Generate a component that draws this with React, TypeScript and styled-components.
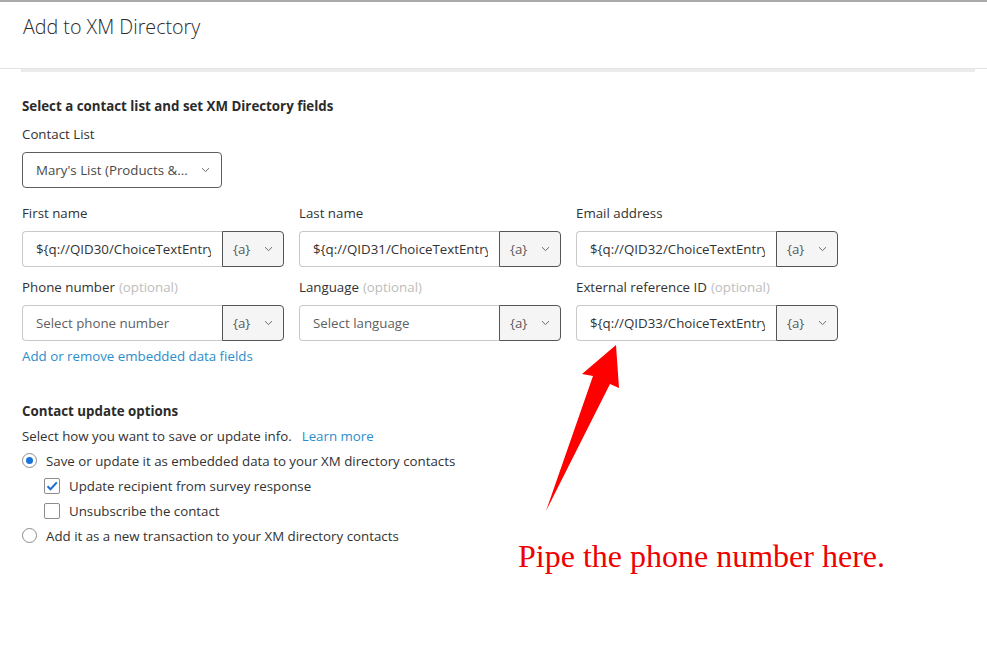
import React from "react";
import styled, { createGlobalStyle } from "styled-components";

const Global = createGlobalStyle`
  html, body { margin: 0; padding: 0; background: #fff; }
  body { font-family: "Open Sans", "Noto Sans", Arial, sans-serif; color: #323232; }
  * { box-sizing: border-box; }
`;

const Page = styled.div`
  position: relative;
  width: 987px;
  height: 669px;
  border-top: 2px solid #a9a9a9;
  overflow: hidden;
`;

const Header = styled.div`
  height: 66px;
  padding: 12px 0 0 23px;
`;

const Title = styled.h1`
  margin: 0;
  font-size: 19.7px;
  font-weight: 300;
  line-height: 26px;
  color: #2b2b2b;
`;

const Divider = styled.div`
  border-top: 1px solid #e3e3e3;
  padding: 0 12px 0 21px;
`;

const Shade = styled.div`
  height: 3px;
  background: #ebebeb;
`;

const Body = styled.div`
  padding: 25px 0 0 22px;
`;

const Heading = styled.h2<{ $top?: number }>`
  margin: ${(p) => p.$top ?? 0}px 0 0;
  font-size: 13.3px;
  font-weight: 700;
  line-height: 18px;
  color: #2b2b2b;
`;

const Label = styled.div<{ $top?: number }>`
  font-size: 13.3px;
  line-height: 18px;
  color: #323232;
  margin: ${(p) => p.$top ?? 0}px 0 9px;
`;

const Optional = styled.span`
  color: #bdbdbd;
  margin-left: 4px;
`;

const Chevron = () => (
  <svg width="9" height="6" viewBox="0 0 9 6" fill="none">
    <path d="M1 1.2 L4.5 4.6 L8 1.2" stroke="#6b6b6b" strokeWidth="1" />
  </svg>
);

const Dropdown = styled.div`
  width: 200px;
  height: 36px;
  border: 1px solid #5e5e5e;
  border-radius: 4px;
  display: flex;
  align-items: center;
  justify-content: space-between;
  padding: 0 11px 0 13px;
  font-size: 13.3px;
  color: #4a4a4a;
  margin-bottom: 16px;
`;

const Grid = styled.div`
  display: grid;
  grid-template-columns: repeat(3, 262px);
  column-gap: 15px;
  row-gap: 11px;
`;

const Field = styled.div``;

const Group = styled.div`
  display: flex;
  height: 36px;
  width: 262px;
`;

const TextPart = styled.div<{ $placeholder?: boolean }>`
  width: 200px;
  border: 1px solid #c9c9c9;
  border-right: none;
  border-radius: 4px 0 0 4px;
  padding: 0 11px 0 13px;
  display: flex;
  align-items: center;
  overflow: hidden;
  white-space: nowrap;
  font-size: 13.3px;
  color: ${(p) => (p.$placeholder ? "#5f5f5f" : "#333")};
`;

const Clip = styled.span`
  display: block;
  overflow: hidden;
  width: 100%;
`;

const Addon = styled.div`
  flex: 1;
  border: 1px solid #555;
  border-radius: 0 4px 4px 0;
  background: #f5f5f5;
  display: flex;
  align-items: center;
  gap: 14px;
  padding-left: 10px;
  font-size: 13.3px;
  color: #5a5a5a;
`;

const Link = styled.a`
  color: #2b8dcc;
  font-size: 13.3px;
  line-height: 18px;
  text-decoration: none;
`;

const LinkRow = styled.div`
  margin-top: 3px;
`;

const Desc = styled.div`
  margin-top: 7px;
  font-size: 13.3px;
  line-height: 18px;
  color: #323232;
  display: flex;
  gap: 10px;
`;

const Options = styled.div`
  margin-top: 3px;
  display: flex;
  flex-direction: column;
`;

const OptionRow = styled.div<{ $indent?: boolean }>`
  height: 25px;
  display: flex;
  align-items: center;
  padding-left: ${(p) => (p.$indent ? 22 : 0)}px;
  gap: 9px;
  font-size: 13.3px;
  color: #323232;
`;

const Radio = styled.span<{ $on?: boolean }>`
  width: 15px;
  height: 15px;
  border-radius: 50%;
  border: 1px solid #8c8c8c;
  display: flex;
  align-items: center;
  justify-content: center;
  &::after {
    content: "";
    width: 7px;
    height: 7px;
    border-radius: 50%;
    background: ${(p) => (p.$on ? "#1a73d9" : "transparent")};
  }
`;

const Check = styled.span`
  width: 16px;
  height: 16px;
  border: 1px solid #8c8c8c;
  border-radius: 2px;
  display: flex;
  align-items: center;
  justify-content: center;
`;

const Overlay = styled.svg`
  position: absolute;
  left: 0;
  top: 0;
  pointer-events: none;
`;

const Note = styled.div`
  position: absolute;
  left: 518px;
  top: 534px;
  font-family: "Liberation Serif", "Times New Roman", serif;
  font-size: 32px;
  line-height: 40px;
  color: #ee0000;
  white-space: nowrap;
`;

type F = { label: string; optional?: boolean; value: string; placeholder?: boolean };

const fields: F[] = [
  { label: "First name", value: "${q://QID30/ChoiceTextEntryValue}" },
  { label: "Last name", value: "${q://QID31/ChoiceTextEntryValue}" },
  { label: "Email address", value: "${q://QID32/ChoiceTextEntryValue}" },
  { label: "Phone number", optional: true, value: "Select phone number", placeholder: true },
  { label: "Language", optional: true, value: "Select language", placeholder: true },
  { label: "External reference ID", optional: true, value: "${q://QID33/ChoiceTextEntryValue}" },
];

export default function App() {
  return (
    <>
      <Global />
      <Page>
        <Header>
          <Title>Add to XM Directory</Title>
        </Header>
        <Divider>
          <Shade />
        </Divider>
        <Body>
          <Heading>Select a contact list and set XM Directory fields</Heading>
          <Label $top={10}>Contact List</Label>
          <Dropdown>
            <span>Mary's List (Products &...</span>
            <Chevron />
          </Dropdown>
          <Grid>
            {fields.map((f) => (
              <Field key={f.label}>
                <Label>
                  {f.label}
                  {f.optional && <Optional>(optional)</Optional>}
                </Label>
                <Group>
                  <TextPart $placeholder={f.placeholder}>
                    <Clip>{f.value}</Clip>
                  </TextPart>
                  <Addon>
                    <span>{"{a}"}</span>
                    <Chevron />
                  </Addon>
                </Group>
              </Field>
            ))}
          </Grid>
          <LinkRow>
            <Link href="#">Add or remove embedded data fields</Link>
          </LinkRow>
          <Heading $top={36}>Contact update options</Heading>
          <Desc>
            <span>Select how you want to save or update info.</span>
            <Link href="#">Learn more</Link>
          </Desc>
          <Options>
            <OptionRow>
              <Radio $on />
              <span>Save or update it as embedded data to your XM directory contacts</span>
            </OptionRow>
            <OptionRow $indent>
              <Check>
                <svg width="12" height="10" viewBox="0 0 12 10">
                  <path d="M1.5 5.2 L4.5 8.2 L10.8 1.3" stroke="#1a6fd0" strokeWidth="2" fill="none" />
                </svg>
              </Check>
              <span>Update recipient from survey response</span>
            </OptionRow>
            <OptionRow $indent>
              <Check />
              <span>Unsubscribe the contact</span>
            </OptionRow>
            <OptionRow>
              <Radio />
              <span>Add it as a new transaction to your XM directory contacts</span>
            </OptionRow>
          </Options>
        </Body>
        <Overlay width="987" height="669" viewBox="0 0 987 669">
          <polygon
            points="616,343 619,386 610,382 546,509 593,374 582,372"
            fill="#ff0000"
          />
        </Overlay>
        <Note>Pipe the phone number here.</Note>
      </Page>
    </>
  );
}
